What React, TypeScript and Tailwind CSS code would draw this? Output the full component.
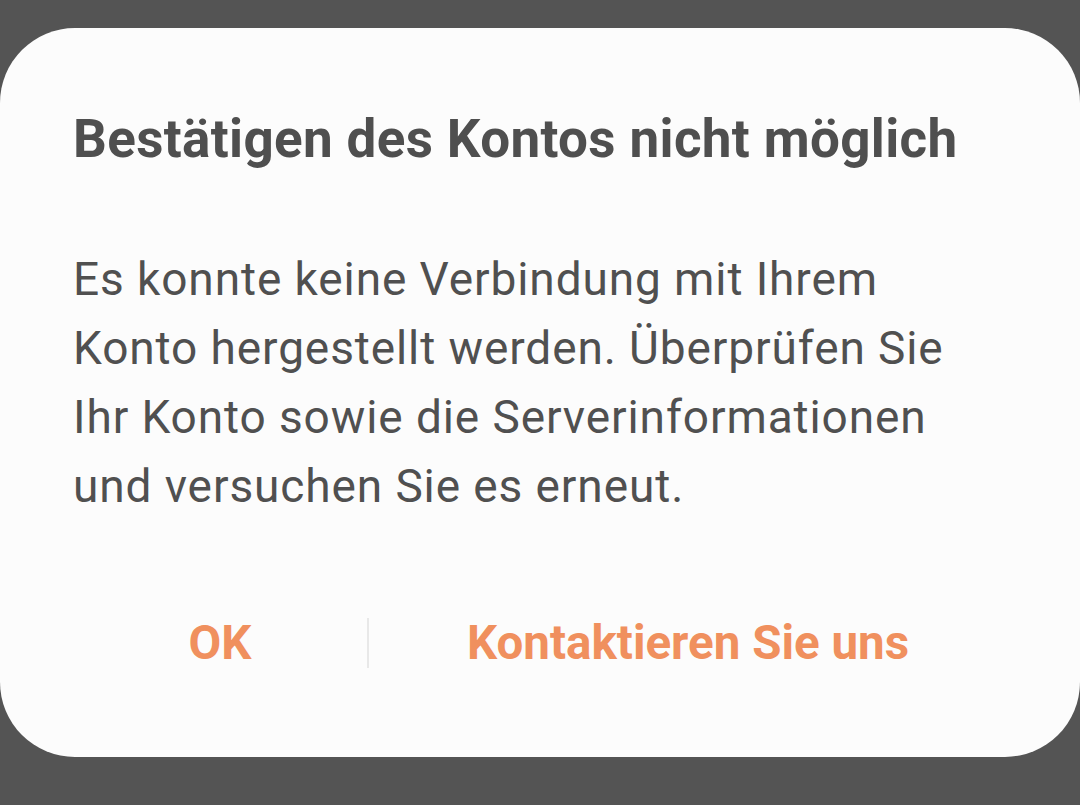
export default function App() {
  return (
    <div className="h-[805px] w-full overflow-hidden bg-[#545454] pt-[28px]" style={{ fontFamily: 'Roboto, "Noto Sans", sans-serif' }}>
      <div className="flex h-[729px] w-full flex-col rounded-[75px] bg-[#fcfcfc] px-[73px] pt-[81px]">
        <h1 className="text-[53px] font-bold leading-[60px] tracking-[0.35px] text-[#4f4f4f]">
          Bestätigen des Kontos nicht möglich
        </h1>

        <p className="mt-[76px] text-[46px] leading-[69px] tracking-[0.9px] text-[#505050]">
          Es konnte keine Verbindung mit Ihrem
          <br />
          Konto hergestellt werden. Überprüfen Sie
          <br />
          Ihr Konto sowie die Serverinformationen
          <br />
          und versuchen Sie es erneut.
        </p>

        <div className="mt-[72px] flex h-[100px] items-center">
          <button type="button" className="w-[294px] text-center text-[47.5px] font-bold leading-[60px] text-[#f0905e]">
            OK
          </button>
          <div className="h-[50px] w-[2px] bg-[#e8e8e8]" />
          <button type="button" className="flex-1 text-center text-[47.5px] font-bold leading-[60px] text-[#f0905e]">
            Kontaktieren Sie uns
          </button>
        </div>
      </div>
    </div>
  );
}
